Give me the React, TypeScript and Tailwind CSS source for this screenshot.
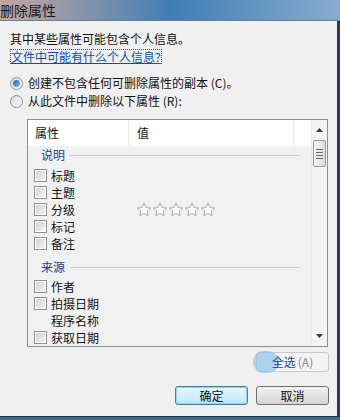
import React from 'react';

const font = { fontFamily: '"Noto Sans CJK SC", "Liberation Sans", sans-serif' };

function Radio({ checked }: { checked?: boolean }) {
  return (
    <span className="relative flex h-[13px] w-[13px] items-center justify-center rounded-full border border-[#8e8f8f] bg-gradient-to-br from-[#d8d8d8] to-[#ffffff]">
      {checked && (
        <span className="h-[7px] w-[7px] rounded-full bg-gradient-to-br from-[#1f5fa8] to-[#7fc0ef]" />
      )}
    </span>
  );
}

function Check() {
  return (
    <span className="flex h-[13px] w-[13px] items-center justify-center border border-[#8e8f8f] bg-white">
      <span className="h-[9px] w-[9px] bg-gradient-to-br from-[#cfd1d4] to-[#f4f4f4]" />
    </span>
  );
}

function Star() {
  return (
    <svg width="16" height="16" viewBox="0 0 16 16">
      <path
        d="M8 1.2l2 4.3 4.7.5-3.5 3.2 1 4.6L8 11.5 3.8 13.8l1-4.6L1.3 6l4.7-.5z"
        fill="#fbfbfb"
        stroke="#a9a9a9"
        strokeWidth="1"
        strokeLinejoin="round"
      />
    </svg>
  );
}

function Item({ label, box = true, stars = false }: { label: string; box?: boolean; stars?: boolean }) {
  return (
    <div className="flex h-[17px] items-center">
      <div className="w-[17px]">{box && <Check />}</div>
      <span className="w-[85px] text-[12px] leading-[17px] text-[#111]">{label}</span>
      {stars && (
        <div className="flex gap-[0px]">
          <Star />
          <Star />
          <Star />
          <Star />
          <Star />
        </div>
      )}
    </div>
  );
}

function Group({ title }: { title: string }) {
  return (
    <div className="flex h-[18px] items-center pl-[13px] pr-[11px]">
      <span className="text-[12px] text-[#1e3f8e]">{title}</span>
      <span className="ml-[5px] h-px flex-1 bg-[#c6cfdb]" />
    </div>
  );
}

export default function App() {
  return (
    <div className="relative h-[420px] w-[340px] overflow-hidden bg-[#f0f0f0]" style={font}>
      {/* title bar */}
      <div className="flex h-[21px] items-center border-b border-[#6c7f93] bg-gradient-to-r from-[#c4a6a0] via-[#3e7db3] to-[#86acd0]">
        <span className="text-[14px] leading-none text-[#1a1a1a]">删除属性</span>
      </div>

      <div className="flex h-[395px] border-r-[3px] border-r-[#2a3d52]">
        <div className="flex flex-1 flex-col pl-[10px]">
          <p className="mt-[10px] text-[12px] leading-[15px] text-[#111]">其中某些属性可能包含个人信息。</p>
          <a className="mt-[3px] w-fit border border-dotted border-[#555] text-[12px] leading-[13px] text-[#0a4fb0] underline">
            文件中可能有什么个人信息?
          </a>

          <div className="mt-[10px] flex h-[18px] items-center gap-[5px]">
            <Radio checked />
            <span className="text-[12px] text-[#111]">创建不包含任何可删除属性的副本 (C)。</span>
          </div>
          <div className="flex h-[18px] items-center gap-[5px]">
            <Radio />
            <span className="text-[12px] text-[#111]">从此文件中删除以下属性 (R):</span>
          </div>

          {/* list box */}
          <div className="ml-[17px] mt-[9px] flex h-[228px] w-[301px] border border-[#8c8f94] bg-[#f1f1f1]">
            <div className="flex flex-1 flex-col overflow-hidden">
              <div className="flex h-[26px] shrink-0 items-center bg-white text-[12px] text-[#111]">
                <span className="w-[100px] pl-[7px]">属性</span>
                <span className="h-[26px] w-px bg-[#e4e6ea]" />
                <span className="w-[164px] pl-[8px]">值</span>
                <span className="h-[26px] w-px bg-[#e4e6ea]" />
              </div>
              <Group title="说明" />
              <div className="mt-[3px] flex flex-col pl-[6px]">
                <Item label="标题" />
                <Item label="主题" />
                <Item label="分级" stars />
                <Item label="标记" />
                <Item label="备注" />
              </div>
              <div className="mt-[6px]">
                <Group title="来源" />
              </div>
              <div className="mt-[2px] flex flex-col pl-[6px]">
                <Item label="作者" />
                <Item label="拍摄日期" />
                <Item label="程序名称" box={false} />
                <Item label="获取日期" />
              </div>
            </div>
            {/* scrollbar */}
            <div className="flex w-[16px] flex-col border-l border-[#e8e8e8] bg-[#f4f4f4]">
              <div className="flex h-[20px] items-center justify-center">
                <svg width="7" height="4" viewBox="0 0 7 4"><path d="M0 4L3.5 0 7 4z" fill="#3a3a3a" /></svg>
              </div>
              <div className="mx-[1px] flex h-[27px] flex-col items-center justify-center gap-[2px] rounded-[2px] border border-[#9a9a9a] bg-gradient-to-r from-[#f6f6f6] to-[#dcdcdc]">
                <span className="h-px w-[7px] bg-[#6b6b6b]" />
                <span className="h-px w-[7px] bg-[#6b6b6b]" />
                <span className="h-px w-[7px] bg-[#6b6b6b]" />
                <span className="h-px w-[7px] bg-[#6b6b6b]" />
              </div>
              <div className="flex-1" />
              <div className="flex h-[20px] items-center justify-center">
                <svg width="7" height="4" viewBox="0 0 7 4"><path d="M0 0L3.5 4 7 0z" fill="#3a3a3a" /></svg>
              </div>
            </div>
          </div>

          <div className="mt-[5px] flex justify-end pr-[8px]">
            <div className="relative flex h-[20px] w-[73px] items-center justify-center rounded-[3px] border border-[#c9c9c9] bg-[#f4f4f4] text-[12px] text-[#8a8a8a]">
              <span className="absolute left-[-4px] top-[-2px] h-[22px] w-[26px] rounded-full bg-[#8fc3ec] opacity-70" />
              <span className="relative text-[#2b3f9c]">全选</span>
              <span className="relative ml-[2px]">(A)</span>
            </div>
          </div>

          <div className="mt-[14px] flex justify-end gap-[8px] pr-[8px]">
            <div className="flex h-[19px] w-[73px] items-center justify-center rounded-[3px] border border-[#3c7fb1] bg-gradient-to-b from-[#eaf6fd] to-[#bee6fd] text-[12px] text-[#111] shadow-[inset_0_0_0_1px_#8fd3f8]">
              确定
            </div>
            <div className="flex h-[19px] w-[73px] items-center justify-center rounded-[3px] border border-[#707070] bg-gradient-to-b from-[#f2f2f2] to-[#d4d4d4] text-[12px] text-[#111]">
              取消
            </div>
          </div>
        </div>
      </div>

      <div className="h-[4px] border-t border-[#1d2f44] bg-[#4a6a8c]" />
    </div>
  );
}
